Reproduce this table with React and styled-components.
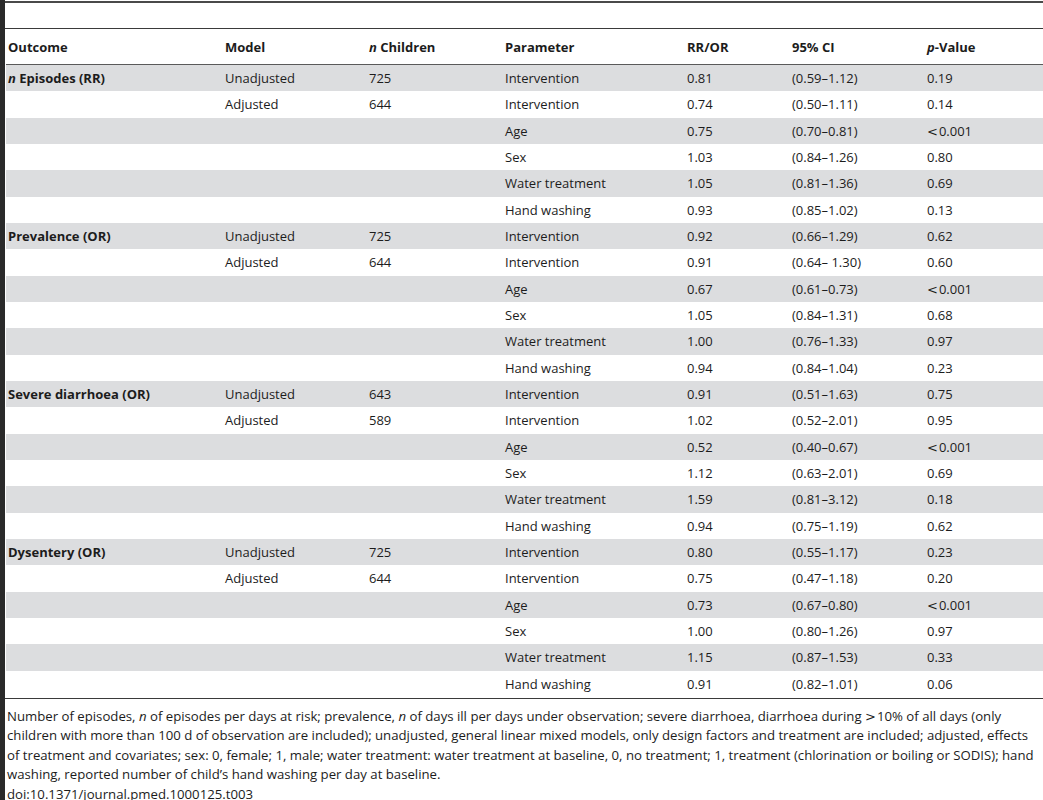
import React from "react";
import styled, { createGlobalStyle } from "styled-components";

const GlobalStyle = createGlobalStyle`
  html, body {
    margin: 0;
    padding: 0;
    background: #ffffff;
  }
  body {
    font-family: "Open Sans", "Liberation Sans", sans-serif;
    color: #1c1c1c;
  }
`;

// Styled components

const Page = styled.div`
  min-height: 800px;
  border-left: 5px solid #2a2a2a;
  box-sizing: border-box;
  overflow: hidden;
`;

const TopRule = styled.div`
  margin-top: 1px;
  height: 2px;
  background: #4a4a4a;
`;

const Caption = styled.div`
  height: 25px;
  border-bottom: 1px solid #3a3a3a;
`;

const Row = styled.div`
  display: grid;
  grid-template-columns: 217px 144px 136px 182px 105px 135px 1fr;
  align-items: center;
  padding-left: 2px;
  margin-left: 1px;
  height: ${props => (props.head ? "35px" : "26.33px")};
  background: ${props => (props.shaded ? "#dcdddf" : "transparent")};
  border-bottom: ${props => (props.head ? "1px solid #5a5a5a" : "none")};
  font-size: 13px;
  font-weight: ${props => (props.head ? 700 : 400)};
`;

const Cell = styled.div`
  white-space: nowrap;
  font-weight: ${props => (props.strong ? 700 : "inherit")};
`;

const Lt = styled.span`
  font-family: "DejaVu Sans", sans-serif;
  font-size: 13px;
  margin-right: 1px;
`;

const BottomRule = styled.div`
  height: 1px;
  background: #3a3a3a;
  margin-top: 1px;
`;

const Footnote = styled.div`
  padding: 8px 0 0 2px;
  font-size: 13.2px;
  color: #1c1c1c;
`;

const NoteLine = styled.div`
  white-space: nowrap;
  height: 19.5px;
  line-height: 19.5px;
`;

const rows = [
  ["n Episodes (RR)", "Unadjusted", "725", "Intervention", "0.81", "(0.59–1.12)", "0.19"],
  ["", "Adjusted", "644", "Intervention", "0.74", "(0.50–1.11)", "0.14"],
  ["", "", "", "Age", "0.75", "(0.70–0.81)", "<0.001"],
  ["", "", "", "Sex", "1.03", "(0.84–1.26)", "0.80"],
  ["", "", "", "Water treatment", "1.05", "(0.81–1.36)", "0.69"],
  ["", "", "", "Hand washing", "0.93", "(0.85–1.02)", "0.13"],
  ["Prevalence (OR)", "Unadjusted", "725", "Intervention", "0.92", "(0.66–1.29)", "0.62"],
  ["", "Adjusted", "644", "Intervention", "0.91", "(0.64– 1.30)", "0.60"],
  ["", "", "", "Age", "0.67", "(0.61–0.73)", "<0.001"],
  ["", "", "", "Sex", "1.05", "(0.84–1.31)", "0.68"],
  ["", "", "", "Water treatment", "1.00", "(0.76–1.33)", "0.97"],
  ["", "", "", "Hand washing", "0.94", "(0.84–1.04)", "0.23"],
  ["Severe diarrhoea (OR)", "Unadjusted", "643", "Intervention", "0.91", "(0.51–1.63)", "0.75"],
  ["", "Adjusted", "589", "Intervention", "1.02", "(0.52–2.01)", "0.95"],
  ["", "", "", "Age", "0.52", "(0.40–0.67)", "<0.001"],
  ["", "", "", "Sex", "1.12", "(0.63–2.01)", "0.69"],
  ["", "", "", "Water treatment", "1.59", "(0.81–3.12)", "0.18"],
  ["", "", "", "Hand washing", "0.94", "(0.75–1.19)", "0.62"],
  ["Dysentery (OR)", "Unadjusted", "725", "Intervention", "0.80", "(0.55–1.17)", "0.23"],
  ["", "Adjusted", "644", "Intervention", "0.75", "(0.47–1.18)", "0.20"],
  ["", "", "", "Age", "0.73", "(0.67–0.80)", "<0.001"],
  ["", "", "", "Sex", "1.00", "(0.80–1.26)", "0.97"],
  ["", "", "", "Water treatment", "1.15", "(0.87–1.53)", "0.33"],
  ["", "", "", "Hand washing", "0.91", "(0.82–1.01)", "0.06"],
];

const renderOutcome = text => {
  if (text.startsWith("n ")) {
    return (
      <>
        <i>n</i>
        {text.slice(1)}
      </>
    );
  }
  return text;
};

const renderP = text => {
  if (text.startsWith("<")) {
    return (
      <>
        <Lt>&lt;</Lt>
        {text.slice(1)}
      </>
    );
  }
  return text;
};

export default function App() {
  return (
    <Page>
      <GlobalStyle />
      <TopRule />
      <Caption />
      <Row head>
        <Cell>Outcome</Cell>
        <Cell>Model</Cell>
        <Cell>
          <i>n</i> Children
        </Cell>
        <Cell>Parameter</Cell>
        <Cell>RR/OR</Cell>
        <Cell>95% CI</Cell>
        <Cell>
          <i>p</i>-Value
        </Cell>
      </Row>
      {rows.map((r, i) => (
        <Row key={i} shaded={i % 2 === 0}>
          <Cell strong>{renderOutcome(r[0])}</Cell>
          <Cell>{r[1]}</Cell>
          <Cell>{r[2]}</Cell>
          <Cell>{r[3]}</Cell>
          <Cell>{r[4]}</Cell>
          <Cell>{r[5]}</Cell>
          <Cell>{renderP(r[6])}</Cell>
        </Row>
      ))}
      <BottomRule />
      <Footnote>
        <NoteLine>
          Number of episodes, <i>n</i> of episodes per days at risk; prevalence, <i>n</i> of days ill per days under
          observation; severe diarrhoea, diarrhoea during <Lt>&gt;</Lt>10% of all days (only
        </NoteLine>
        <NoteLine>
          children with more than 100 d of observation are included); unadjusted, general linear mixed models, only
          design factors and treatment are included; adjusted, effects
        </NoteLine>
        <NoteLine>
          of treatment and covariates; sex: 0, female; 1, male; water treatment: water treatment at baseline, 0, no
          treatment; 1, treatment (chlorination or boiling or SODIS); hand
        </NoteLine>
        <NoteLine>washing, reported number of child’s hand washing per day at baseline.</NoteLine>
        <NoteLine>doi:10.1371/journal.pmed.1000125.t003</NoteLine>
      </Footnote>
    </Page>
  );
}
